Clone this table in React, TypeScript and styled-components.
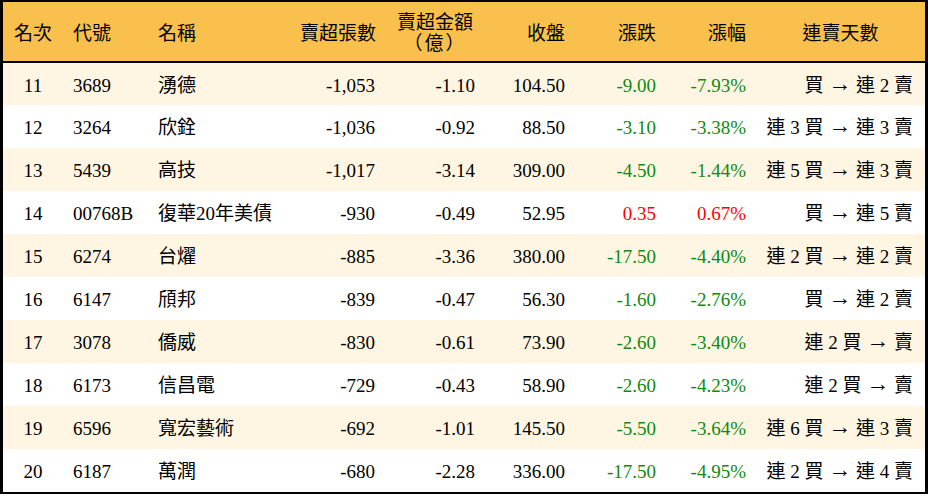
import React, { FC } from "react";
import styled, { createGlobalStyle } from "styled-components";

const colors = {
  header: "#f9c04e",
  stripe: "#fef6e3",
  white: "#ffffff",
  black: "#000000",
  green: "#108a10",
  red: "#ff0000",
};

type Row = {
  rank: number;
  code: string;
  name: string;
  lots: string;
  amount: string;
  close: string;
  change: string;
  pct: string;
  from: string;
  to: string;
};

const rows: Row[] = [
  { rank: 11, code: "3689", name: "湧德", lots: "-1,053", amount: "-1.10", close: "104.50", change: "-9.00", pct: "-7.93%", from: "買", to: "連 2 賣" },
  { rank: 12, code: "3264", name: "欣銓", lots: "-1,036", amount: "-0.92", close: "88.50", change: "-3.10", pct: "-3.38%", from: "連 3 買", to: "連 3 賣" },
  { rank: 13, code: "5439", name: "高技", lots: "-1,017", amount: "-3.14", close: "309.00", change: "-4.50", pct: "-1.44%", from: "連 5 買", to: "連 3 賣" },
  { rank: 14, code: "00768B", name: "復華20年美債", lots: "-930", amount: "-0.49", close: "52.95", change: "0.35", pct: "0.67%", from: "買", to: "連 5 賣" },
  { rank: 15, code: "6274", name: "台燿", lots: "-885", amount: "-3.36", close: "380.00", change: "-17.50", pct: "-4.40%", from: "連 2 買", to: "連 2 賣" },
  { rank: 16, code: "6147", name: "頎邦", lots: "-839", amount: "-0.47", close: "56.30", change: "-1.60", pct: "-2.76%", from: "買", to: "連 2 賣" },
  { rank: 17, code: "3078", name: "僑威", lots: "-830", amount: "-0.61", close: "73.90", change: "-2.60", pct: "-3.40%", from: "連 2 買", to: "賣" },
  { rank: 18, code: "6173", name: "信昌電", lots: "-729", amount: "-0.43", close: "58.90", change: "-2.60", pct: "-4.23%", from: "連 2 買", to: "賣" },
  { rank: 19, code: "6596", name: "寬宏藝術", lots: "-692", amount: "-1.01", close: "145.50", change: "-5.50", pct: "-3.64%", from: "連 6 買", to: "連 3 賣" },
  { rank: 20, code: "6187", name: "萬潤", lots: "-680", amount: "-2.28", close: "336.00", change: "-17.50", pct: "-4.95%", from: "連 2 買", to: "連 4 賣" },
];

const widths = [60, 85, 142, 95, 100, 90, 91, 90, 169];

const GlobalStyle = createGlobalStyle`
  html, body {
    margin: 0;
    padding: 0;
    background: ${colors.white};
  }
  body {
    font-family: "Liberation Serif", "Noto Sans CJK TC", serif;
  }
`;

const Frame = styled.div`
  width: 928px;
  box-sizing: border-box;
  border: 3px solid ${colors.black};
  border-top-width: 2px;
  border-bottom-width: 2px;
  overflow: hidden;
`;

const Table = styled.table`
  width: 100%;
  table-layout: fixed;
  border-collapse: collapse;
  font-size: 19px;
  color: ${colors.black};
`;

const HeadRow = styled.tr`
  height: 60px;
  background: ${colors.header};
  border-bottom: 2px solid ${colors.black};
`;

type Align = "left" | "right" | "center";

const HeadCell = styled.th<{ $align: Align }>`
  font-weight: 400;
  text-align: ${(p) => p.$align};
  padding: 3px 10px 0;
  line-height: 21px;
  vertical-align: middle;
  white-space: nowrap;
`;

const Unit = styled.span`
  letter-spacing: 2px;
`;

const BodyRow = styled.tr<{ $stripe: boolean }>`
  height: 43px;
  background: ${(p) => (p.$stripe ? colors.stripe : colors.white)};
`;

const Cell = styled.td<{ $align: Align; $color?: string }>`
  text-align: ${(p) => p.$align};
  color: ${(p) => p.$color ?? colors.black};
  padding: 3px 10px 0;
  vertical-align: middle;
  white-space: nowrap;
  line-height: 22px;
`;

const Streak = styled(Cell)`
  padding: 3px 12px 0 0;
`;

const Arrow = styled.span`
  font-size: 23px;
  line-height: 0;
  position: relative;
  top: -1px;
`;

const moveColor = (v: string) => (v.startsWith("-") ? colors.green : colors.red);

const App: FC = () => (
  <>
    <GlobalStyle />
    <Frame>
      <Table>
        <colgroup>
          {widths.map((w, i) => (
            <col key={i} style={{ width: w }} />
          ))}
        </colgroup>
        <thead>
          <HeadRow>
            <HeadCell $align="center">名次</HeadCell>
            <HeadCell $align="left">代號</HeadCell>
            <HeadCell $align="left">名稱</HeadCell>
            <HeadCell $align="right">賣超張數</HeadCell>
            <HeadCell $align="center">
              賣超金額
              <br />
              <Unit>（億）</Unit>
            </HeadCell>
            <HeadCell $align="right">收盤</HeadCell>
            <HeadCell $align="right">漲跌</HeadCell>
            <HeadCell $align="right">漲幅</HeadCell>
            <HeadCell $align="center">連賣天數</HeadCell>
          </HeadRow>
        </thead>
        <tbody>
          {rows.map((r, i) => (
            <BodyRow key={r.rank} $stripe={i % 2 === 0}>
              <Cell $align="center">{r.rank}</Cell>
              <Cell $align="left">{r.code}</Cell>
              <Cell $align="left">{r.name}</Cell>
              <Cell $align="right">{r.lots}</Cell>
              <Cell $align="right">{r.amount}</Cell>
              <Cell $align="right">{r.close}</Cell>
              <Cell $align="right" $color={moveColor(r.change)}>{r.change}</Cell>
              <Cell $align="right" $color={moveColor(r.pct)}>{r.pct}</Cell>
              <Streak $align="right">
                {r.from} <Arrow>→</Arrow> {r.to}
              </Streak>
            </BodyRow>
          ))}
        </tbody>
      </Table>
    </Frame>
  </>
);

export default App;
